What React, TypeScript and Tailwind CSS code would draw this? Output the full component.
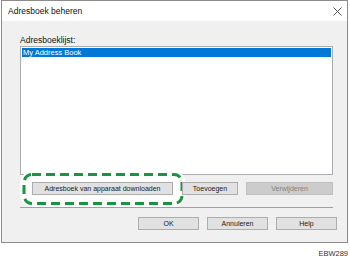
import React from 'react';

const font = { fontFamily: '"Liberation Sans", Arial, sans-serif' };

function Btn({ children, w, disabled }: { children: React.ReactNode; w: string; disabled?: boolean }) {
  return (
    <div
      className={`relative z-10 ${w} h-[13px] flex items-center justify-center whitespace-nowrap text-[7px] leading-none border ${
        disabled ? 'bg-[#cccccc] border-[#bfbfbf] text-[#838383]' : 'bg-[#e1e1e1] border-[#adadad] text-[#1a1a1a]'
      }`}
    >
      {children}
    </div>
  );
}

export default function App() {
  return (
    <div className="w-[350px] h-[258px] bg-white relative overflow-hidden" style={font}>
      {/* dialog */}
      <div className="ml-[1px] w-[347px] h-[243px] border border-[#8c8c8c] bg-[#f0f0f0] flex flex-col">
        <div className="h-[20px] bg-white flex items-center justify-between pl-[6px] pr-[4px] shrink-0">
          <span className="text-[8.5px] text-[#111]">Adresboek beheren</span>
          <svg width="9" height="9" viewBox="0 0 9 9" className="mr-[1px]">
            <path d="M0.5 0.5L8.5 8.5M8.5 0.5L0.5 8.5" stroke="#444" strokeWidth="0.9" />
          </svg>
        </div>

        <div className="pl-[18px] pr-[14px] flex flex-col">
          <div className="mt-[14px] h-[10px] text-[8.5px] leading-[10px] text-[#111]">Adresboeklijst:</div>
          <div className="mt-[1px] h-[129px] w-[313px] bg-white border border-[#abadb3] p-[1px]">
            <div className="h-[9px] bg-[#0078d7] text-white text-[7.5px] leading-[9px] pl-[1px]">My Address Book</div>
          </div>

          <div className="mt-[7px] flex pl-[12px]">
            <Btn w="w-[141px]">Adresboek van apparaat downloaden</Btn>
            <div className="ml-[9px]">
              <Btn w="w-[56px]">Toevoegen</Btn>
            </div>
            <div className="ml-[8px]">
              <Btn w="w-[87px]" disabled>
                Verwijderen
              </Btn>
            </div>
          </div>

          <div className="mt-[12px] h-[1px] w-[313px] bg-[#a0a0a0]" />

          <div className="mt-[9px] flex justify-end mr-[-4px] gap-[8px]">
            <Btn w="w-[61px]">OK</Btn>
            <Btn w="w-[61px]">Annuleren</Btn>
            <Btn w="w-[61px]">Help</Btn>
          </div>
        </div>
      </div>

      {/* highlight marker */}
      <svg className="absolute z-0 left-[19px] top-[170px]" width="170" height="38" viewBox="0 0 170 38">
        <rect x="5" y="4.5" width="158" height="29" rx="8" fill="white" stroke="white" strokeWidth="7" />
        <rect x="5" y="4.5" width="158" height="29" rx="8" fill="none" stroke="#17963f" strokeWidth="3" strokeDasharray="9 5" />
      </svg>

      <div className="absolute right-[2px] bottom-[1px] text-[7.5px] leading-none text-[#333]">EBW289</div>
    </div>
  );
}
